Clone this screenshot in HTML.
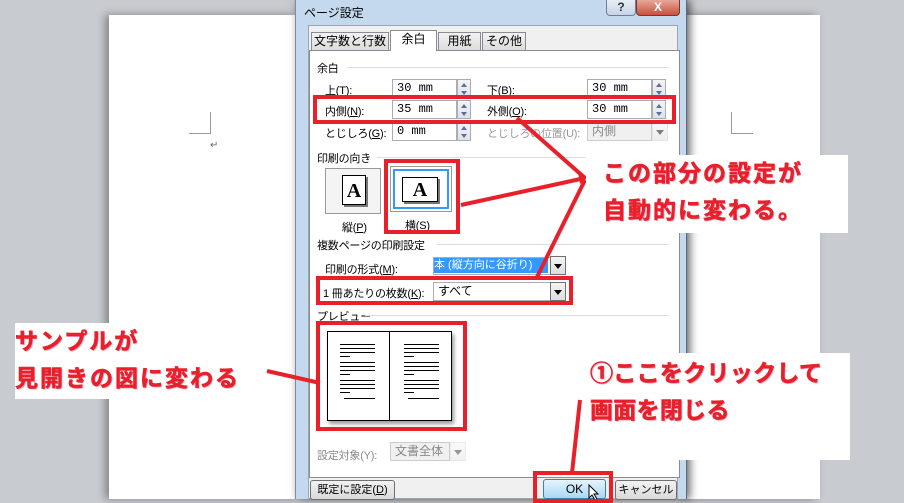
<!DOCTYPE html>
<html><head><meta charset="utf-8"><style>
*{margin:0;padding:0;box-sizing:border-box}
body{width:904px;height:499px;overflow:hidden;background:#c8cbd0;position:relative;font-family:"Liberation Sans","Noto Sans CJK JP",sans-serif;font-size:12px;color:#000}
.a{position:absolute}
.page{background:#fff;box-shadow:-4px 0 8px rgba(0,0,0,.35)}
.dlg{left:295px;top:0;width:392px;height:499px;background:#c4d8ee;border-left:1px solid #7a8ea6;border-right:1px solid #5a6b80;box-shadow:3px 0 8px rgba(0,0,0,.6)}
.inner{left:12px;top:25px;width:370px;height:474px;background:#f0f0f0;border:1px solid #98a6b6}
.panel{background:#fff;border:1px solid #898c95}
.tab{border:1px solid #898c95;border-bottom:none;background:linear-gradient(#f2f2f2,#dcdcdc);height:18px;top:32px;font-size:12px;text-align:center;line-height:17px}
.in{background:#fff;border:1px solid #abadb3;height:19px;font-size:12px;line-height:17px;padding-left:4px;font-family:"Liberation Mono","Noto Sans CJK JP",monospace}
.sp{width:14px;height:19px;background:linear-gradient(#f4f4f4,#dde3ea);border:1px solid #abadb3}
.sp:before{content:"";position:absolute;left:3px;top:3px;border:3px solid transparent;border-bottom:4px solid #5a6ea0;border-top:none}
.sp:after{content:"";position:absolute;left:3px;top:11px;border:3px solid transparent;border-top:4px solid #5a6ea0;border-bottom:none}
.lbl{font-size:11px;letter-spacing:-0.2px}
.grp{height:1px;background:#d5dfe5}
.rb{border:4px solid #e8202a}
.big{font-weight:bold;font-size:23px;color:#e8202a;line-height:37px;letter-spacing:2px;-webkit-text-stroke:0.6px #e8202a;text-shadow:1px 1px 0 #f6a0c0;white-space:nowrap}
.box{background:#fff}
.btn{border:1px solid #707070;border-radius:3px;background:linear-gradient(#f2f2f2,#dadada);text-align:center;font-size:12px;line-height:18px;height:20px}
.dd{width:16px;height:19px;background:linear-gradient(#f4f4f4,#ddd);border:1px solid #707070}
.dd:after{content:"";position:absolute;left:3px;top:7px;border:4px solid transparent;border-top:5px solid #000;border-bottom:none}
</style></head><body>
<div class="a page" style="left:109px;top:15px;width:190px;height:484px"></div>
<div class="a" style="left:189px;top:112px;width:22px;height:22px;border-right:1px solid #999;border-bottom:1px solid #999"></div>
<div class="a" style="left:210px;top:140px;font-size:10px;color:#666">↵</div>
<div class="a page" style="left:686px;top:15px;width:134px;height:484px"></div>
<div class="a" style="left:731px;top:112px;width:22px;height:22px;border-left:1px solid #999;border-bottom:1px solid #999"></div>

<div class="a dlg">
 <div class="a" style="left:8px;top:4px;font-size:12px">ページ設定</div>
 <div class="a" style="left:310px;top:0;width:30px;height:16px;border:1px solid #6d7f98;border-top:none;border-radius:0 0 4px 4px;background:linear-gradient(#e8eef6,#c5d3e6);text-align:center;font-weight:bold;color:#333;font-size:12px">?</div>
 <div class="a" style="left:340px;top:0;width:44px;height:16px;border:1px solid #6d3a3a;border-top:none;border-radius:0 0 4px 4px;background:linear-gradient(#e8a89a,#c9503c);text-align:center;font-weight:bold;color:#fff;font-size:12px">X</div>
 <div class="a inner"></div>
</div>
<div class="a tab" style="left:311px;width:78px">文字数と行数</div>
<div class="a tab" style="left:390px;width:47px;top:30px;height:21px;background:#fff;z-index:2">余白</div>
<div class="a tab" style="left:438px;width:43px">用紙</div>
<div class="a tab" style="left:482px;width:44px">その他</div>
<div class="a panel" style="left:309px;top:50px;width:371px;height:428px"></div>

<div class="a lbl" style="left:317px;top:60px">余白</div><div class="a grp" style="left:347px;top:67px;width:322px"></div>
<div class="a lbl" style="left:325px;top:82px">上(<u>T</u>):</div>
<div class="a in" style="left:392px;top:79px;width:65px">30 mm</div><div class="a sp" style="left:457px;top:79px"></div>
<div class="a lbl" style="left:487px;top:82px">下(<u>B</u>):</div>
<div class="a in" style="left:587px;top:79px;width:65px">30 mm</div><div class="a sp" style="left:652px;top:79px"></div>
<div class="a lbl" style="left:325px;top:103px">内側(<u>N</u>):</div>
<div class="a in" style="left:392px;top:100px;width:65px">35 mm</div><div class="a sp" style="left:457px;top:100px"></div>
<div class="a lbl" style="left:487px;top:103px">外側(<u>O</u>):</div>
<div class="a in" style="left:587px;top:100px;width:65px">30 mm</div><div class="a sp" style="left:652px;top:100px"></div>
<div class="a lbl" style="left:325px;top:125px">とじしろ(<u>G</u>):</div>
<div class="a in" style="left:392px;top:122px;width:65px">0 mm</div><div class="a sp" style="left:457px;top:122px"></div>
<div class="a lbl" style="left:487px;top:125px;color:#999">とじしろの位置(U):</div>
<div class="a in" style="left:587px;top:122px;width:65px;background:#f0f0f0;color:#888;border-color:#ccc;font-family:'Liberation Sans','Noto Sans CJK JP',sans-serif">内側</div><div class="a dd" style="left:652px;top:122px;border-color:#ccc;opacity:.5"></div>

<div class="a lbl" style="left:317px;top:150px">印刷の向き</div><div class="a grp" style="left:377px;top:157px;width:230px"></div>
<div class="a" style="left:325px;top:168px;width:56px;height:46px;border:1px solid #999;background:#f4f4f4"></div>
<div class="a" style="left:342px;top:175px;width:24px;height:30px;border:1px solid #000;background:#fff;box-shadow:2px 2px 0 #777;font:bold 20px 'Liberation Serif',serif;text-align:center;line-height:30px">A</div>
<div class="a lbl" style="left:342px;top:219px">縦(<u>P</u>)</div>
<div class="a" style="left:390px;top:166px;width:62px;height:46px;border:1px solid #999;background:#fff"></div>
<div class="a" style="left:393px;top:169px;width:56px;height:40px;border:2px solid #3399ff"></div>
<div class="a" style="left:402px;top:177px;width:36px;height:25px;border:1px solid #000;background:#fff;box-shadow:2px 2px 0 #777;font:bold 20px 'Liberation Serif',serif;text-align:center;line-height:25px">A</div>
<div class="a lbl" style="left:405px;top:217px">横(<u>S</u>)</div>

<div class="a lbl" style="left:317px;top:237px">複数ページの印刷設定</div><div class="a grp" style="left:437px;top:244px;width:232px"></div>
<div class="a lbl" style="left:325px;top:261px">印刷の形式(<u>M</u>):</div>
<div class="a" style="left:433px;top:257px;width:118px;height:18px;background:#fff;border:1px solid #abadb3"></div>
<div class="a" style="left:434px;top:258px;width:114px;height:15px;background:#3399ff;color:#fff;font-size:11px;line-height:15px">本 (縦方向に谷折り)</div>
<div class="a dd" style="left:550px;top:256px"></div>
<div class="a lbl" style="left:323px;top:285px">1 冊あたりの枚数(<u>K</u>):</div>
<div class="a in" style="left:433px;top:282px;width:118px;font-family:'Liberation Sans','Noto Sans CJK JP',sans-serif">すべて</div>
<div class="a dd" style="left:550px;top:282px"></div>

<div class="a lbl" style="left:317px;top:308px">プレビュー</div><div class="a grp" style="left:365px;top:315px;width:304px"></div>
<div class="a" style="left:327px;top:331px;width:125px;height:90px;border:1px solid #000;background:#fff;box-shadow:2px 3px 4px rgba(0,0,0,.4)"></div>
<div class="a" style="left:389px;top:331px;width:1px;height:90px;background:#000"></div>
<svg class="a" style="left:327px;top:331px" width="125" height="90"><g stroke="#000" stroke-width="1">
<path d="M13 13.5h35M13 17.5h35M13 21.5h35M13 25.5h10M13 31.5h35M13 35.5h35M13 39.5h35M13 43.5h10M13 49.5h35M13 53.5h35M13 57.5h35M13 61.5h10M17 67.5h31"/>
<path d="M77 13.5h35M77 17.5h35M77 21.5h35M77 25.5h10M77 31.5h35M77 35.5h35M77 39.5h35M77 43.5h10M77 49.5h35M77 53.5h35M77 57.5h35M77 61.5h10M81 67.5h31"/></g></svg>

<div class="a lbl" style="left:317px;top:447px;color:#888">設定対象(Y):</div>
<div class="a in" style="left:390px;top:442px;width:60px;background:#f0f0f0;color:#888;border-color:#ccc;font-family:'Liberation Sans','Noto Sans CJK JP',sans-serif">文書全体</div>
<div class="a dd" style="left:450px;top:442px;border-color:#ccc;opacity:.4"></div>

<div class="a btn" style="left:310px;top:480px;width:85px;font-size:11px">既定に設定(<u>D</u>)</div>
<div class="a btn" style="left:543px;top:479px;width:63px;border-color:#3c7fb1;background:linear-gradient(#e5f4fc,#a9d9f4)">OK</div>
<div class="a btn" style="left:615px;top:480px;width:62px;font-size:11px">キャンセル</div>
<svg class="a" style="left:588px;top:484px" width="14" height="16"><path d="M1 1v13l3-3 3 5 2-1-3-5h4z" fill="#fff" stroke="#000"/></svg>

<div class="a rb" style="left:313px;top:95px;width:363px;height:29px"></div>
<div class="a rb" style="left:384px;top:159px;width:76px;height:75px"></div>
<div class="a rb" style="left:316px;top:276px;width:257px;height:29px"></div>
<div class="a rb" style="left:316px;top:321px;width:151px;height:110px"></div>
<div class="a rb" style="left:533px;top:471px;width:80px;height:32px"></div>

<svg class="a" style="left:0;top:0" width="904" height="499"><g stroke="#e8202a" stroke-width="4" fill="none">
<path d="M585 178L517 118M585 178L461 205M585 180L537 277M267 371L320 383M580 400L572 473"/></g>
<path d="M578 172l10 5-8 7z" fill="#e8202a"/></svg>

<div class="a box" style="left:586px;top:155px;width:262px;height:78px"></div>
<div class="a big" style="left:603px;top:155px">この部分の設定が<br>自動的に変わる。</div>
<div class="a box" style="left:15px;top:323px;width:95px;height:76px"></div>
<div class="a big" style="left:15px;top:323px">サンプルが<br>見開きの図に変わる</div>
<div class="a box" style="left:588px;top:353px;width:262px;height:107px"></div>
<div class="a big" style="left:590px;top:355px;letter-spacing:0.3px">①ここをクリックして<br>画面を閉じる</div>
</body></html>
